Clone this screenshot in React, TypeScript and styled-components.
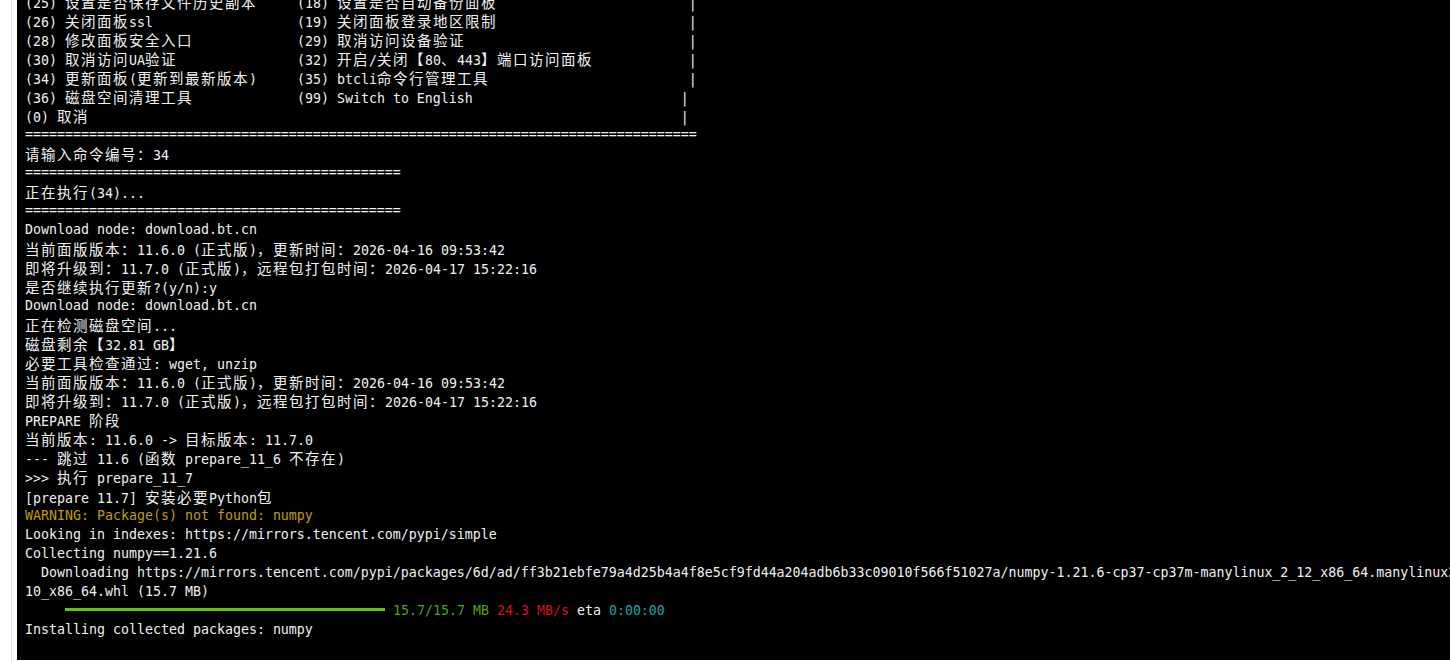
import React from "react";
import styled, { createGlobalStyle } from "styled-components";

const GlobalStyle = createGlobalStyle`
  html, body { margin: 0; padding: 0; background: #ffffff; }
  body { width: 1450px; height: 661px; overflow: hidden; }
`;

const Page = styled.div`
  display: flex;
  width: 1450px;
  height: 661px;
  background: #ffffff;
`;

const Gutter = styled.div`
  width: 11px;
  flex: none;
`;

const GutterLine = styled.div`
  width: 1px;
  flex: none;
  background: #e6e6e6;
  margin-right: 5px;
`;

const Terminal = styled.div`
  flex: 1;
  height: 660px;
  background: #000000;
  overflow: hidden;
  padding-left: 8px;
  font-family: "DejaVu Sans Mono", "Noto Sans CJK SC", monospace;
  font-size: 13.29px;
  color: #f0f0f0;
`;

const Screen = styled.div`
  margin-top: -8.3px;
  display: flex;
  flex-direction: column;
`;

const Row = styled.div`
  height: 19.04px;
  line-height: 19.04px;
  white-space: pre;
`;

const Wide = styled.span`
  font-family: "Noto Sans CJK SC", sans-serif;
  font-size: 14.5px;
  letter-spacing: 1.5px;
`;

const colors: Record<string, string> = {
  w: "#f0f0f0",
  y: "#c19c00",
  g: "#4fa314",
  r: "#d0121f",
  c: "#1ea3ad",
};

const Colored = styled.span<{ $c: string }>`
  color: ${(p) => colors[p.$c]};
`;

const Bar = styled.span`
  display: inline-block;
  width: 320px;
  height: 3px;
  background: #6cbd12;
  vertical-align: middle;
  margin-top: -2px;
`;

type Seg = { t?: string; c?: string; bar?: boolean };

const isWide = (ch: string) => {
  const code = ch.codePointAt(0) || 0;
  return (
    (code >= 0x2e80 && code <= 0x9fff) ||
    (code >= 0xff00 && code <= 0xffef) ||
    (code >= 0xac00 && code <= 0xd7af)
  );
};

const cells = (s: string) =>
  Array.from(s).reduce((n, ch) => n + (isWide(ch) ? 2 : 1), 0);

const padTo = (s: string, col: number) => s + " ".repeat(Math.max(0, col - cells(s)));

function renderText(text: string, key: string) {
  const runs: { wide: boolean; s: string }[] = [];
  for (const ch of Array.from(text)) {
    const w = isWide(ch);
    const last = runs[runs.length - 1];
    if (last && last.wide === w) last.s += ch;
    else runs.push({ wide: w, s: ch });
  }
  return runs.map((r, i) =>
    r.wide ? <Wide key={key + i}>{r.s}</Wide> : <React.Fragment key={key + i}>{r.s}</React.Fragment>
  );
}

const menu: [string, string, number][] = [
  ["(25) 设置是否保存文件历史副本", "(18) 设置是否自动备份面板", 83],
  ["(26) 关闭面板ssl", "(19) 关闭面板登录地区限制", 83],
  ["(28) 修改面板安全入口", "(29) 取消访问设备验证", 83],
  ["(30) 取消访问UA验证", "(32) 开启/关闭【80、443】端口访问面板", 83],
  ["(34) 更新面板(更新到最新版本)", "(35) btcli命令行管理工具", 83],
  ["(36) 磁盘空间清理工具", "(99) Switch to English", 82],
  ["(0) 取消", "", 82],
];

const lines: Seg[][] = [
  ...menu.map(([l, r, bar]) => [{ t: padTo(padTo(l, 34) + r, bar) + "|" }]),
  [{ t: "=".repeat(84) }],
  [{ t: "请输入命令编号：34" }],
  [{ t: "=".repeat(47) }],
  [{ t: "正在执行(34)..." }],
  [{ t: "=".repeat(47) }],
  [{ t: "Download node: download.bt.cn" }],
  [{ t: "当前面版版本：11.6.0 (正式版)，更新时间：2026-04-16 09:53:42" }],
  [{ t: "即将升级到：11.7.0 (正式版)，远程包打包时间：2026-04-17 15:22:16" }],
  [{ t: "是否继续执行更新?(y/n):y" }],
  [{ t: "Download node: download.bt.cn" }],
  [{ t: "正在检测磁盘空间..." }],
  [{ t: "磁盘剩余【32.81 GB】" }],
  [{ t: "必要工具检查通过: wget, unzip" }],
  [{ t: "当前面版版本：11.6.0 (正式版)，更新时间：2026-04-16 09:53:42" }],
  [{ t: "即将升级到：11.7.0 (正式版)，远程包打包时间：2026-04-17 15:22:16" }],
  [{ t: "PREPARE 阶段" }],
  [{ t: "当前版本: 11.6.0 -> 目标版本: 11.7.0" }],
  [{ t: "--- 跳过 11.6 (函数 prepare_11_6 不存在)" }],
  [{ t: ">>> 执行 prepare_11_7" }],
  [{ t: "[prepare 11.7] 安装必要Python包" }],
  [{ t: "WARNING: Package(s) not found: numpy", c: "y" }],
  [{ t: "Looking in indexes: https://mirrors.tencent.com/pypi/simple" }],
  [{ t: "Collecting numpy==1.21.6" }],
  [
    {
      t: "  Downloading https://mirrors.tencent.com/pypi/packages/6d/ad/ff3b21ebfe79a4d25b4a4f8e5cf9fd44a204adb6b33c09010f566f51027a/numpy-1.21.6-cp37-cp37m-manylinux_2_12_x86_64.manylinux20",
    },
  ],
  [{ t: "10_x86_64.whl (15.7 MB)" }],
  [
    { t: "     " },
    { bar: true },
    { t: " " },
    { t: "15.7/15.7 MB", c: "g" },
    { t: " " },
    { t: "24.3 MB/s", c: "r" },
    { t: " eta " },
    { t: "0:00:00", c: "c" },
  ],
  [{ t: "Installing collected packages: numpy" }],
];

export default function App() {
  return (
    <>
      <GlobalStyle />
      <Page>
        <Gutter />
        <GutterLine />
        <Terminal>
          <Screen>
            {lines.map((segs, i) => (
              <Row key={i}>
                {segs.map((s, j) =>
                  s.bar ? (
                    <Bar key={j} />
                  ) : s.c ? (
                    <Colored key={j} $c={s.c}>
                      {renderText(s.t || "", `${i}-${j}-`)}
                    </Colored>
                  ) : (
                    <React.Fragment key={j}>{renderText(s.t || "", `${i}-${j}-`)}</React.Fragment>
                  )
                )}
              </Row>
            ))}
          </Screen>
        </Terminal>
      </Page>
    </>
  );
}
